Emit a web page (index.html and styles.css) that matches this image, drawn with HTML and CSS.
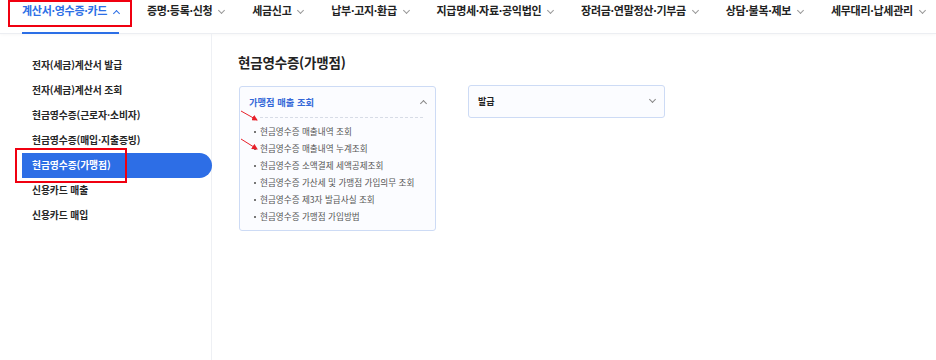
FILE: index.html
```html
<!DOCTYPE html>
<html lang="ko">
<head>
  <meta charset="UTF-8">
  <title>현금영수증(가맹점)</title>
  <link rel="stylesheet" href="styles.css">
</head>
<body>
  <header class="gnb">
    <div class="gnb-item active"><span class="gnb-label">계산서·영수증·카드 <i class="chev up"></i></span></div>
    <div class="gnb-item"><span class="gnb-label">증명·등록·신청 <i class="chev"></i></span></div>
    <div class="gnb-item"><span class="gnb-label">세금신고 <i class="chev"></i></span></div>
    <div class="gnb-item"><span class="gnb-label">납부·고지·환급 <i class="chev"></i></span></div>
    <div class="gnb-item"><span class="gnb-label">지급명세·자료·공익법인 <i class="chev"></i></span></div>
    <div class="gnb-item"><span class="gnb-label">장려금·연말정산·기부금 <i class="chev"></i></span></div>
    <div class="gnb-item"><span class="gnb-label">상담·불복·제보 <i class="chev"></i></span></div>
    <div class="gnb-item"><span class="gnb-label">세무대리·납세관리 <i class="chev"></i></span></div>
  </header>
  <div class="layout">
    <nav class="side">
      <a class="side-item">전자(세금)계산서 발급</a>
      <a class="side-item">전자(세금)계산서 조회</a>
      <a class="side-item">현금영수증(근로자·소비자)</a>
      <a class="side-item">현금영수증(매입·지출증빙)</a>
      <a class="side-item active">현금영수증(가맹점)</a>
      <a class="side-item">신용카드 매출</a>
      <a class="side-item">신용카드 매입</a>
    </nav>
    <main class="content">
      <h2 class="page-title">현금영수증(가맹점)</h2>
      <div class="cards">
        <div class="card">
          <div class="card-head open">
            <span>가맹점 매출 조회</span>
            <i class="chev up"></i>
          </div>
          <ul class="card-list">
            <li>현금영수증 매출내역 조회</li>
            <li>현금영수증 매출내역 누계조회</li>
            <li>현금영수증 소액결제 세액공제조회</li>
            <li>현금영수증 가산세 및 가맹점 가입의무 조회</li>
            <li>현금영수증 제3자 발급사실 조회</li>
            <li>현금영수증 가맹점 가입방법</li>
          </ul>
          <svg class="arrows" width="40" height="60" viewBox="0 0 40 60">
            <defs>
              <marker id="head" markerWidth="6" markerHeight="6" refX="5" refY="3" orient="auto">
                <path d="M0,0 L6,3 L0,6 Z" fill="#e8202a"/>
              </marker>
            </defs>
            <line x1="1" y1="24" x2="17" y2="33" stroke="#e8202a" stroke-width="1" marker-end="url(#head)"/>
            <line x1="1" y1="52" x2="17" y2="62" stroke="#e8202a" stroke-width="1" marker-end="url(#head)"/>
          </svg>
        </div>
        <div class="card card-small">
          <div class="card-head">
            <span class="dark">발급</span>
            <i class="chev"></i>
          </div>
        </div>
      </div>
    </main>
  </div>
</body>
</html>
```

FILE: styles.css
```css
* { margin: 0; padding: 0; box-sizing: border-box; }
body {
  font-family: "Noto Sans CJK KR", "Noto Sans", sans-serif;
  color: #222;
  background: #fff;
  width: 936px;
  height: 360px;
  overflow: hidden;
}
a { text-decoration: none; color: inherit; }
ul { list-style: none; }

/* chevrons */
.chev {
  display: inline-block;
  width: 5px;
  height: 5px;
  border-right: 1px solid #888;
  border-bottom: 1px solid #888;
  transform: rotate(45deg);
  vertical-align: middle;
  margin-top: -4px;
}
.chev.up {
  transform: rotate(-135deg);
  margin-top: 2px;
}

/* Top menu */
.gnb {
  display: flex;
  height: 34px;
  padding-left: 8px;
  border-bottom: 1px solid #eceef2;
  box-shadow: 0 1px 3px rgba(0,0,0,0.03);
}
.gnb-item {
  position: relative;
  padding: 2px 14px 0;
  font-size: 11px;
  font-weight: 700;
  line-height: 16px;
  white-space: nowrap;
}
.gnb-label {
  display: block;
  height: 32px;
  letter-spacing: -0.3px;
}
.gnb-label .chev {
  margin-left: 4px;
  border-color: #999;
}
.gnb-item.active .gnb-label {
  color: #2c6fe6;
  border-bottom: 2px solid #2c6fe6;
  height: 32px;
}
.gnb-item.active .chev { border-color: #2c6fe6; }
.gnb-item.active::before {
  content: "";
  position: absolute;
  left: 0;
  top: 0;
  width: 120px;
  height: 23px;
  border: 2px solid #f00010;
}

/* Layout */
.layout {
  display: flex;
  height: 326px;
}
.side {
  width: 212px;
  flex: none;
  border-right: 1px solid #eef0f4;
  padding-top: 19px;
  display: flex;
  flex-direction: column;
}
.side-item {
  display: block;
  height: 25px;
  line-height: 25px;
  padding-left: 32px;
  font-size: 9.8px;
  font-weight: 700;
  color: #262626;
  letter-spacing: -0.1px;
}
.side-item.active {
  position: relative;
  margin-left: 22px;
  margin-right: -1px;
  padding-left: 10px;
  background: #2d6ee6;
  color: #fff;
  border-radius: 0 13px 13px 0;
}
.side-item.active::before {
  content: "";
  position: absolute;
  left: -7px;
  top: -5px;
  width: 108px;
  height: 31px;
  border: 2px solid #f00010;
}

/* Content */
.content {
  flex: 1;
  padding: 17px 0 0 26px;
}
.page-title {
  font-size: 13.5px;
  font-weight: 700;
  line-height: 22px;
  letter-spacing: -0.2px;
}
.cards {
  display: flex;
  gap: 32px;
  align-items: flex-start;
  margin-top: 13px;
  margin-left: 1px;
}
.card {
  position: relative;
  width: 197px;
  border: 1px solid #cddbf5;
  border-radius: 3px;
  background: #fbfcff;
}
.card-small {
  margin-top: -1px;
}
.card-head {
  display: flex;
  justify-content: space-between;
  align-items: center;
  height: 31px;
  padding: 0 9px 0 9px;
  font-size: 9.3px;
  font-weight: 700;
  color: #3568d8;
}
.card-head.open { height: 30px; }
.card-head .dark { color: #222; font-size: 9px; }
.card-list {
  margin: 0 12px 0 20px;
  border-top: 1px dashed #d7dce6;
  padding: 5px 0 5px;
}
.card-list li {
  position: relative;
  height: 17px;
  line-height: 17px;
  font-size: 8.6px;
  color: #555;
  white-space: nowrap;
}
.card-list li::before {
  content: "";
  position: absolute;
  left: -6px;
  top: 8px;
  width: 2px;
  height: 2px;
  background: #777;
}
.arrows {
  position: absolute;
  left: 0;
  top: 0;
  overflow: visible;
}
```
